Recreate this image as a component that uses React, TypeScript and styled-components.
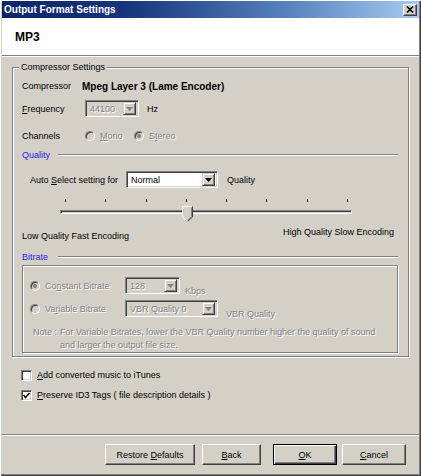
import React from 'react';
import styled, { createGlobalStyle } from 'styled-components';

const GlobalStyle = createGlobalStyle`
  html, body {
    margin: 0;
    padding: 0;
    background: #d4d0c8;
  }
  body {
    font-family: "Liberation Sans", Arial, sans-serif;
    font-size: 9px;
    color: #000;
  }
  * {
    box-sizing: border-box;
  }
`;

const Window = styled.div`
  width: 421px;
  height: 476px;
  background: #d4d0c8;
  padding: 1px 2px 2px 2px;
  display: flex;
  flex-direction: column;
  box-shadow: inset 1px 1px 0 #fff, inset -1px -1px 0 #404040, inset -2px -2px 0 #808080;
`;

const TitleBar = styled.div`
  height: 17px;
  display: flex;
  align-items: center;
  justify-content: space-between;
  padding: 0 2px 0 2px;
  background: linear-gradient(to right, #0a246a 0%, #16357c 30%, #5a86c0 70%, #a6caf0 100%);
  color: #fff;
  font-weight: bold;
  font-size: 10px;
`;

const CloseButton = styled.div`
  width: 14px;
  height: 12px;
  display: flex;
  align-items: center;
  justify-content: center;
  background: #d4d0c8;
  border: 1px solid;
  border-color: #fff #404040 #404040 #fff;
  box-shadow: inset -1px -1px 0 #808080;
`;

const Header = styled.div`
  height: 38px;
  display: flex;
  align-items: center;
  padding-left: 13px;
  background: #fff;
  font-weight: bold;
  font-size: 12px;
  border-bottom: 1px solid #808080;
  box-shadow: 0 1px 0 #fff;
`;

const Body = styled.div`
  flex: 1;
  display: flex;
  flex-direction: column;
  padding: 5px 10px 0 10px;
`;

const Group = styled.fieldset`
  margin: 0;
  min-width: 0;
  padding: 0 10px 3px 9px;
  border: 1px solid #808080;
  box-shadow: inset 1px 1px 0 #fff, 1px 1px 0 #fff;
  display: flex;
  flex-direction: column;
`;

const Legend = styled.legend`
  padding: 0 2px;
  margin-left: -3px;
  line-height: 12px;
  background: #d4d0c8;
`;

const Row = styled.div<{ $mt: number; $h: number; $pl?: number }>`
  display: flex;
  align-items: center;
  margin-top: ${p => p.$mt}px;
  height: ${p => p.$h}px;
  padding-left: ${p => p.$pl ?? 0}px;
`;

const Label = styled.span<{ $w?: number }>`
  width: ${p => (p.$w ? `${p.$w}px` : 'auto')};
  flex-shrink: 0;
  white-space: nowrap;
`;

const Dim = styled.span<{ $ml?: number; $w?: number; $low?: boolean }>`
  color: #808080;
  text-shadow: 1px 1px 0 #fff;
  white-space: nowrap;
  margin-left: ${p => p.$ml ?? 0}px;
  width: ${p => (p.$w ? `${p.$w}px` : 'auto')};
  flex-shrink: 0;
  align-self: ${p => (p.$low ? 'flex-end' : 'auto')};
  margin-bottom: ${p => (p.$low ? '-2px' : '0')};
`;

const Strong = styled.span`
  font-weight: bold;
  font-size: 10px;
  white-space: nowrap;
`;

const Text = styled.span<{ $ml?: number }>`
  margin-left: ${p => p.$ml ?? 0}px;
  white-space: nowrap;
`;

const SectionHead = styled.div<{ $mt: number }>`
  display: flex;
  align-items: center;
  height: 12px;
  margin-top: ${p => p.$mt}px;
`;

const SectionTitle = styled.span`
  width: 36px;
  color: #2424e8;
`;

const Etch = styled.div`
  flex: 1;
  height: 2px;
  border-top: 1px solid #808080;
  border-bottom: 1px solid #fff;
`;

const ComboBox = styled.div<{ $w: number; $off?: boolean; $ml?: number }>`
  width: ${p => p.$w}px;
  height: 17px;
  margin-left: ${p => p.$ml ?? 0}px;
  flex-shrink: 0;
  display: flex;
  align-items: center;
  padding: 2px;
  background: ${p => (p.$off ? '#d4d0c8' : '#fff')};
  border: 1px solid;
  border-color: #808080 #fff #fff #808080;
  box-shadow: inset 1px 1px 0 #404040, inset -1px -1px 0 #d4d0c8;
`;

const ComboText = styled.span<{ $off?: boolean }>`
  flex: 1;
  padding-left: 2px;
  color: ${p => (p.$off ? '#808080' : '#000')};
  text-shadow: ${p => (p.$off ? '1px 1px 0 #fff' : 'none')};
  white-space: nowrap;
  overflow: hidden;
`;

const ArrowButton = styled.span`
  width: 13px;
  height: 13px;
  display: flex;
  align-items: center;
  justify-content: center;
  background: #d4d0c8;
  border: 1px solid;
  border-color: #d4d0c8 #404040 #404040 #d4d0c8;
  box-shadow: inset 1px 1px 0 #fff, inset -1px -1px 0 #808080;
`;

const RadioDot = styled.span<{ $on?: boolean; $ml?: number }>`
  width: 10px;
  height: 10px;
  margin-left: ${p => p.$ml ?? 0}px;
  flex-shrink: 0;
  border-radius: 50%;
  display: inline-flex;
  align-items: center;
  justify-content: center;
  background: #d4d0c8;
  border: 1px solid;
  border-color: #808080 #fff #fff #808080;
  box-shadow: inset 1px 1px 0 #404040;
  &::after {
    content: '';
    width: 4px;
    height: 4px;
    border-radius: 50%;
    background: ${p => (p.$on ? '#808080' : 'transparent')};
  }
`;

const Slider = styled.div`
  position: relative;
  margin: 10px 0 0 38px;
  width: 292px;
  height: 24px;
`;

const Ticks = styled.div`
  display: flex;
  justify-content: space-between;
  padding: 1px 4px 0 5px;
  height: 5px;
`;

const Tick = styled.span`
  width: 1px;
  height: 3px;
  background: #202020;
`;

const Track = styled.div`
  margin-top: 7px;
  height: 4px;
  border: 1px solid;
  border-color: #808080 #fff #fff #808080;
  box-shadow: inset 1px 1px 0 #404040;
`;

const Thumb = styled.svg<{ $x: number }>`
  position: absolute;
  left: ${p => p.$x}px;
  top: 8px;
`;

const EncodingRow = styled.div`
  display: flex;
  justify-content: space-between;
  height: 18px;
  margin-top: 3px;
  line-height: 14px;
  padding-right: 4px;
`;

const LowText = styled.span`
  align-self: flex-end;
`;

const HighText = styled.span`
  align-self: flex-start;
`;

const InnerBox = styled.div`
  margin-top: 2px;
  height: 88px;
  border: 1px solid #808080;
  box-shadow: inset 1px 1px 0 #fff, 1px 1px 0 #fff;
  padding-left: 7px;
  display: flex;
  flex-direction: column;
`;

const Note = styled.div`
  display: flex;
  margin-top: 9px;
  padding-left: 3px;
  line-height: 13px;
  color: #808080;
  text-shadow: 1px 1px 0 #fff;
`;

const NoteLead = styled.span`
  width: 27px;
  flex-shrink: 0;
  white-space: pre;
`;

const NoteText = styled.span`
  width: 318px;
`;

const CheckRow = styled.div<{ $mt: number }>`
  display: flex;
  align-items: center;
  height: 14px;
  margin-top: ${p => p.$mt}px;
  padding-left: 9px;
`;

const CheckBox = styled.span`
  width: 11px;
  height: 11px;
  display: flex;
  align-items: center;
  justify-content: center;
  background: #fff;
  border: 1px solid;
  border-color: #808080 #fff #fff #808080;
  box-shadow: inset 1px 1px 0 #404040, inset -1px -1px 0 #d4d0c8;
  margin-right: 5px;
`;

const Footer = styled.div`
  height: 40px;
  display: flex;
  justify-content: flex-end;
  align-items: flex-start;
  padding: 9px 13px 0 0;
  border-top: 1px solid #808080;
  box-shadow: inset 0 1px 0 #fff;
`;

const Button = styled.div<{ $w: number; $ml: number; $default?: boolean }>`
  width: ${p => p.$w}px;
  height: 21px;
  margin-left: ${p => p.$ml}px;
  display: flex;
  align-items: center;
  justify-content: center;
  background: #d4d0c8;
  border: 1px solid;
  border-color: ${p => (p.$default ? '#000' : '#fff #404040 #404040 #fff')};
  box-shadow: ${p =>
    p.$default
      ? 'inset 1px 1px 0 #fff, inset -1px -1px 0 #404040, inset -2px -2px 0 #808080'
      : 'inset -1px -1px 0 #808080'};
`;

const DownArrow = ({ off }: { off?: boolean }) => (
  <svg width="7" height="4" viewBox="0 0 7 4">
    <polygon points="0,0 7,0 3.5,4" fill={off ? '#808080' : '#000'} />
  </svg>
);

const Combo = ({ w, value, off, ml }: { w: number; value: string; off?: boolean; ml?: number }) => (
  <ComboBox $w={w} $off={off} $ml={ml}>
    <ComboText $off={off}>{value}</ComboText>
    <ArrowButton>
      <DownArrow off={off} />
    </ArrowButton>
  </ComboBox>
);

const ticks = [0, 1, 2, 3, 4, 5, 6, 7];
const quality = 3;

const App = () => {
  return (
    <>
      <GlobalStyle />
      <Window>
        <TitleBar>
          <span>Output Format Settings</span>
          <CloseButton>
            <svg width="8" height="7" viewBox="0 0 8 7">
              <path d="M1 0.5 L7 6.5 M7 0.5 L1 6.5" stroke="#000" strokeWidth="1.6" />
            </svg>
          </CloseButton>
        </TitleBar>
        <Header>MP3</Header>
        <Body>
          <Group>
            <Legend>Compressor Settings</Legend>
            <Row $mt={6} $h={14}>
              <Label $w={60}>Compressor</Label>
              <Strong>Mpeg Layer 3 (Lame Encoder)</Strong>
            </Row>
            <Row $mt={7} $h={17}>
              <Label $w={63}>
                <u>F</u>requency
              </Label>
              <Combo w={54} value="44100" off />
              <Text $ml={8}>Hz</Text>
            </Row>
            <Row $mt={12} $h={14}>
              <Label $w={63}>Channels</Label>
              <RadioDot />
              <Dim $ml={5} $w={34}>
                <u>M</u>ono
              </Dim>
              <RadioDot $on />
              <Dim $ml={5}>
                S<u>t</u>ereo
              </Dim>
            </Row>
            <SectionHead $mt={6}>
              <SectionTitle>Quality</SectionTitle>
              <Etch />
            </SectionHead>
            <Row $mt={10} $h={17} $pl={8}>
              <Label $w={96}>
                Auto <u>S</u>elect setting for
              </Label>
              <Combo w={92} value="Normal" />
              <Text $ml={9}>Quality</Text>
            </Row>
            <Slider>
              <Ticks>
                {ticks.map(t => (
                  <Tick key={t} />
                ))}
              </Ticks>
              <Track />
              <Thumb $x={122 + (quality - 3) * 40.4} width="11" height="16" viewBox="0 0 11 16">
                <path d="M0.5 0.5 H10.5 V11 L5.5 15.5 L0.5 11 Z" fill="#d4d0c8" />
                <path d="M0.5 11 V0.5 H10" stroke="#fff" fill="none" />
                <path d="M10.5 0.5 V11 L5.5 15.5" stroke="#404040" fill="none" />
                <path d="M9.5 1.5 V10.6 L5.5 14.2" stroke="#808080" fill="none" />
                <path d="M0.5 11 L5.5 15.5" stroke="#fff" fill="none" />
              </Thumb>
            </Slider>
            <EncodingRow>
              <LowText>Low Quality Fast Encoding</LowText>
              <HighText>High Quality Slow Encoding</HighText>
            </EncodingRow>
            <SectionHead $mt={8}>
              <SectionTitle>Bitrate</SectionTitle>
              <Etch />
            </SectionHead>
            <InnerBox>
              <Row $mt={11} $h={17}>
                <RadioDot $on />
                <Dim $ml={5} $w={80}>
                  Co<u>n</u>stant Bitrate
                </Dim>
                <Combo w={55} value="128" off />
                <Dim $ml={5} $low>
                  Kbps
                </Dim>
              </Row>
              <Row $mt={6} $h={17}>
                <RadioDot />
                <Dim $ml={5} $w={80}>
                  Va<u>r</u>iable Bitrate
                </Dim>
                <Combo w={93} value="VBR Quality 0" off />
                <Dim $ml={8} $low>
                  VBR Quality
                </Dim>
              </Row>
              <Note>
                <NoteLead>{'Note : '}</NoteLead>
                <NoteText>
                  For Variable Bitrates, lower the VBR Quality number higher the quality of sound and larger
                  the output file size.
                </NoteText>
              </Note>
            </InnerBox>
          </Group>
          <CheckRow $mt={11}>
            <CheckBox />
            <span>
              <u>A</u>dd converted music to iTunes
            </span>
          </CheckRow>
          <CheckRow $mt={6}>
            <CheckBox>
              <svg width="7" height="7" viewBox="0 0 7 7">
                <path d="M0.5 3 L2.5 5.5 L6.5 1" stroke="#000" strokeWidth="1.5" fill="none" />
              </svg>
            </CheckBox>
            <span>
              <u>P</u>reserve ID3 Tags ( file description details )
            </span>
          </CheckRow>
        </Body>
        <Footer>
          <Button $w={90} $ml={0}>
            <span>
              Restore <u>D</u>efaults
            </span>
          </Button>
          <Button $w={59} $ml={7}>
            <span>
              <u>B</u>ack
            </span>
          </Button>
          <Button $w={64} $ml={12} $default>
            <span>
              <u>O</u>K
            </span>
          </Button>
          <Button $w={64} $ml={5}>
            <span>
              <u>C</u>ancel
            </span>
          </Button>
        </Footer>
      </Window>
    </>
  );
};

export default App;
